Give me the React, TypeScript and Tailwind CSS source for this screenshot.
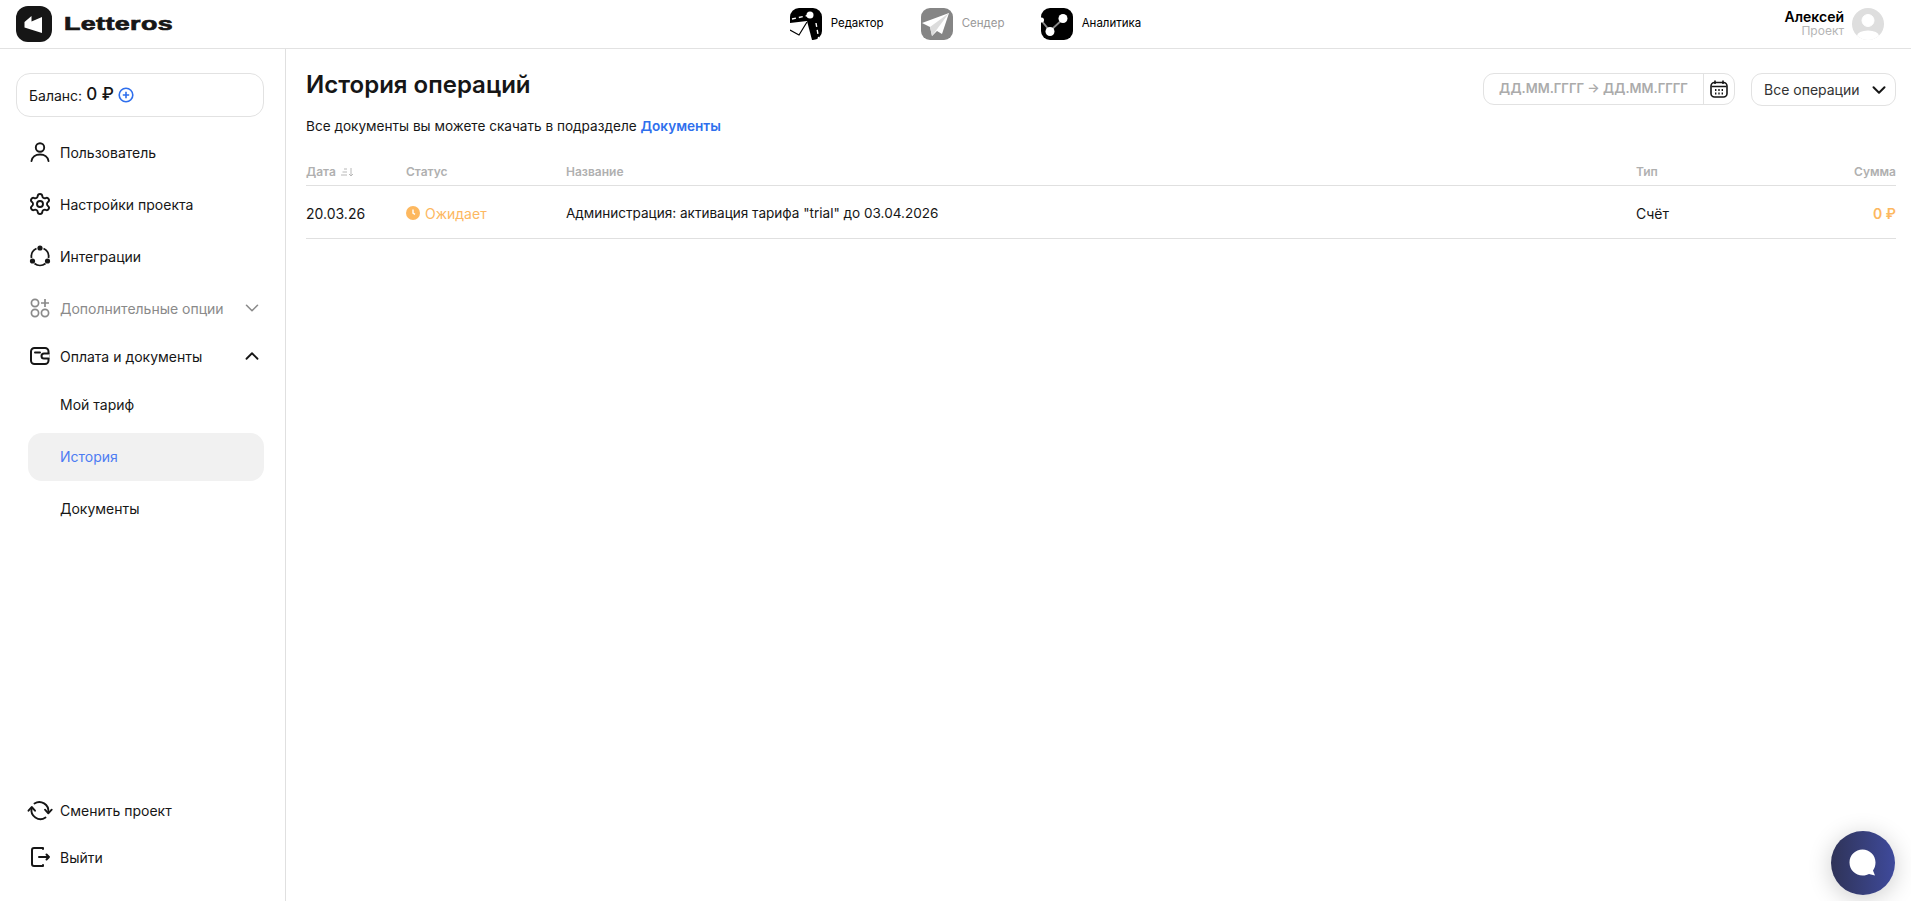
import React from 'react';
import { ChevronDown, ChevronUp, Settings } from 'lucide-react';

const LogoMark = () => (
  <svg viewBox="0 0 36 36" className="w-9 h-9 shrink-0">
    <rect width="36" height="36" rx="12" fill="#161616" />
    <path d="M8.500 16 15.500 10V15.500L26 11V27L8.500 21.500Z" fill="#fff" />
  </svg>
);

const EditorIcon = () => (
  <svg viewBox="0 0 32 32" className="w-8 h-8 shrink-0">
    <rect width="32" height="32" rx="9" fill="#000" />
    <path d="M2 11 20 7M26 15 29 32" stroke="#fff" strokeWidth="1.400" strokeDasharray="4 3" fill="none" />
    <circle cx="20" cy="7" r="3.500" fill="#fff" />
    <path d="M0 15 17 13 22 32H7Q0 32 0 25Z" fill="#fff" />
    <path d="M0 22 9 27 17 14" stroke="#000" strokeWidth="1.200" fill="none" />
  </svg>
);

const SenderIcon = () => (
  <svg viewBox="0 0 32 32" className="w-8 h-8 shrink-0">
    <rect width="32" height="32" rx="9" fill="#858585" />
    <path d="M28 5 1 15 9 19 11 28 16 23 21 26Z" fill="#fff" />
    <path d="M28 5 9 19 11 28Z" fill="#dcdcdc" />
  </svg>
);

const AnalyticsIcon = () => (
  <svg viewBox="0 0 32 32" className="w-8 h-8 shrink-0">
    <rect width="32" height="32" rx="9" fill="#000" />
    <path d="M0 12 9 23 22 11" stroke="#8a8a8a" strokeWidth="1.800" fill="none" />
    <circle cx="0.500" cy="12" r="2.500" fill="#fff" />
    <circle cx="9" cy="23.500" r="4.500" fill="#fff" />
    <circle cx="22" cy="10.500" r="4.500" fill="#fff" />
  </svg>
);

const UserIcon = () => (
  <svg viewBox="0 0 24 24" className="w-6 h-6" fill="none" stroke="#161616" strokeWidth="1.900" strokeLinecap="round">
    <circle cx="12" cy="7.500" r="4.200" />
    <path d="M3.500 21c.5-4 4-6.500 8.500-6.500s8 2.500 8.500 6.500" />
  </svg>
);

const IntegrationsIcon = () => (
  <svg viewBox="0 0 24 24" className="w-6 h-6" fill="none" stroke="#161616" strokeWidth="1.800">
    <path d="M8.500 4.500A9 9 0 0 0 3.500 14M15.500 4.500A9 9 0 0 1 20.500 14M6.500 19.500A9 9 0 0 0 17.500 19.500" />
    <circle cx="12" cy="4" r="2.600" fill="#161616" stroke="none" />
    <circle cx="4.500" cy="17" r="2.600" fill="#161616" stroke="none" />
    <circle cx="19.500" cy="17" r="2.600" fill="#161616" stroke="none" />
  </svg>
);

const OptionsIcon = () => (
  <svg viewBox="0 0 24 24" className="w-6 h-6" fill="none" stroke="#8a8a8a" strokeWidth="1.700">
    <circle cx="7" cy="7" r="3.600" />
    <circle cx="7" cy="17" r="3.600" />
    <circle cx="17" cy="17" r="3.600" />
    <path d="M17 3v8M13 7h8" />
  </svg>
);

const WalletIcon = () => (
  <svg viewBox="0 0 24 24" className="w-6 h-6" fill="none" stroke="#161616" strokeWidth="2" strokeLinecap="round">
    <rect x="3" y="4" width="17.500" height="16" rx="3.500" />
    <path d="M21.500 9.500H16a2.500 2.500 0 0 0 0 5h5.500Z" fill="#fff" stroke="#fff" strokeWidth="0" />
    <path d="M20.500 9.500H16a2.500 2.500 0 0 0 0 5h4.500" />
    <path d="M7 8.500h5" />
  </svg>
);

const SwitchIcon = () => (
  <svg viewBox="0 0 24 24" className="w-6 h-6 overflow-visible" fill="none" stroke="#161616" strokeWidth="1.900" strokeLinecap="round" strokeLinejoin="round">
    <path d="M6.500 5.500A9 9 0 0 1 20.300 14" />
    <path d="M3.700 10A9 9 0 0 0 17.500 19.500" />
    <path d="M0.500 12.700 3.700 9 7 12.700" />
    <path d="M17 11.700 20.300 15.300 23.700 11.700" />
  </svg>
);

const LogoutIcon = () => (
  <svg viewBox="0 0 24 24" className="w-6 h-6" fill="none" stroke="#161616" strokeWidth="2" strokeLinecap="round" strokeLinejoin="round">
    <path d="M15 4V3H6a2 2 0 0 0-2 2v14a2 2 0 0 0 2 2h9v-1" />
    <path d="M11 12h10M18.500 9.500 21 12l-2.500 2.500" />
  </svg>
);

const NavRow = ({ icon, label, right, muted }: { icon: React.ReactNode; label: string; right?: React.ReactNode; muted?: boolean }) => (
  <div className={`h-[48px] pl-[28px] pr-[22px] flex items-center ${muted ? 'text-[#8a8a8a]' : 'text-[#161616]'}`}>
    <span className="w-6 h-6 flex items-center justify-center mr-[8px] shrink-0">{icon}</span>
    <span className="text-[14px] flex-1">{label}</span>
    {right}
  </div>
);

const SubRow = ({ label, active }: { label: string; active?: boolean }) => (
  <div className={`h-[48px] mx-[28px] w-[236px] pl-[32px] pb-[2px] flex items-center rounded-[14px] text-[14px] ${active ? 'bg-[#f1f1f1] text-[#4d7cf3]' : 'text-[#161616]'}`}>
    {label}
  </div>
);

export default function App() {
  return (
    <div className="h-[901px] w-[1911px] overflow-hidden bg-white flex flex-col font-['Inter',sans-serif] text-[#161616] relative">
      <header className="h-[49px] shrink-0 border-b border-[#e2e2e2] flex items-center relative pl-4 pr-[27px]">
        <div className="flex items-center gap-[12px]">
          <LogoMark />
          <span className="font-['Liberation_Sans',sans-serif] font-bold text-[19px] tracking-[0.3px] [-webkit-text-stroke:0.7px_#161616] scale-x-[1.41] origin-left">Letteros</span>
        </div>
        <nav className="flex-1 flex items-center justify-center pl-[5px] gap-[24px]">
          <div className="flex items-center gap-[9px] w-[107px]">
            <EditorIcon />
            <span className="text-[11.5px] text-black">Редактор</span>
          </div>
          <div className="flex items-center gap-[9px] w-[96px]">
            <SenderIcon />
            <span className="text-[11.5px] text-[#999]">Сендер</span>
          </div>
          <div className="flex items-center gap-[9px]">
            <AnalyticsIcon />
            <span className="text-[11.5px] text-black">Аналитика</span>
          </div>
        </nav>
        <div className="flex items-center gap-[8px]">
          <div className="text-right leading-[14px]">
            <div className="text-[14px] font-semibold text-black">Алексей</div>
            <div className="text-[12px] text-[#b5b5b5]">Проект</div>
          </div>
          <svg viewBox="0 0 32 32" className="w-8 h-8">
            <defs>
              <clipPath id="ava">
                <circle cx="16" cy="16" r="16" />
              </clipPath>
            </defs>
            <circle cx="16" cy="16" r="16" fill="#dedede" />
            <g clipPath="url(#ava)">
              <circle cx="16" cy="12.500" r="6" fill="#fff" stroke="#fff" />
              <ellipse cx="16" cy="28" rx="11" ry="5.500" fill="#fff" />
            </g>
          </svg>
        </div>
      </header>

      <div className="flex flex-1 min-h-0">
        <aside className="w-[286px] shrink-0 border-r border-[#e0e0e0] flex flex-col pt-[24px] pb-[20px]">
          <div className="mx-4 w-[248px] h-[44px] border border-[#e2e2e2] rounded-[14px] flex items-center pl-[12px] text-[14px]">
            <span>Баланс:</span>
            <span className="ml-[4px] text-[17px] font-medium">0 ₽</span>
            <svg viewBox="0 0 16 16" className="w-4 h-4 ml-[4px]" fill="none" stroke="#2f6fed" strokeWidth="1.600">
              <circle cx="8" cy="8" r="6.800" />
              <path d="M8 4.800v6.400M4.800 8h6.400" />
            </svg>
          </div>
          <div className="mt-[11px]">
            <NavRow icon={<UserIcon />} label="Пользователь" />
            <div className="h-[4px]" />
            <NavRow icon={<Settings size={24} strokeWidth={1.9} />} label="Настройки проекта" />
            <div className="h-[4px]" />
            <NavRow icon={<IntegrationsIcon />} label="Интеграции" />
            <div className="h-[4px]" />
            <NavRow muted icon={<OptionsIcon />} label="Дополнительные опции" right={<ChevronDown size={22} strokeWidth={1.7} className="text-[#8a8a8a]" />} />
            <NavRow icon={<WalletIcon />} label="Оплата и документы" right={<ChevronUp size={22} strokeWidth={2} />} />
            <div className="h-px" />
            <SubRow label="Мой тариф" />
            <div className="h-[4px]" />
            <SubRow label="История" active />
            <div className="h-[4px]" />
            <SubRow label="Документы" />
          </div>
          <div className="mt-auto">
            <div className="-mb-px">
              <NavRow icon={<SwitchIcon />} label="Сменить проект" />
            </div>
            <NavRow icon={<LogoutIcon />} label="Выйти" />
          </div>
        </aside>

        <main className="flex-1 min-w-0 pl-[20px] pr-[15px] pt-[24px]">
          <div className="flex items-start justify-between">
            <div>
              <h1 className="text-[24px] leading-[24px] font-semibold">История операций</h1>
              <p className="text-[13.6px] leading-[18px] mt-[20px]">
                Все документы вы можете скачать в подразделе{' '}
                <span className="font-semibold text-[#2f6fed]">Документы</span>
              </p>
            </div>
            <div className="flex items-start gap-4">
              <div className="w-[252px] h-[32px] border border-[#e2e2e2] rounded-[11px] flex items-center">
                <div className="w-[219px] text-center text-[13px] font-semibold text-[#ababab] whitespace-nowrap">ДД.ММ.ГГГГ → ДД.ММ.ГГГГ</div>
                <div className="flex-1 h-full border-l border-[#e2e2e2] flex items-center justify-center">
                  <svg viewBox="0 0 20 20" className="w-5 h-5" fill="none" stroke="#161616" strokeWidth="1.600">
                    <rect x="2" y="3.500" width="16" height="14.500" rx="3.500" />
                    <path d="M6 1.500v3.500M14 1.500v3.500M2.500 7.500h15" />
                    <path d="M6 11h1.400M9.300 11h1.400M12.600 11h1.400M6 14.500h1.400M9.300 14.500h1.400M12.600 14.500h1.400" strokeWidth="1.800" />
                  </svg>
                </div>
              </div>
              <div className="w-[145px] h-[33px] border border-[#e2e2e2] rounded-[11px] flex items-center justify-between pl-[12px] pr-[5px] text-[14px] text-[#333]">
                <span>Все операции</span>
                <ChevronDown size={22} strokeWidth={2.2} className="text-[#161616]" />
              </div>
            </div>
          </div>

          <div className="mt-[24px] h-[27px] border-b border-[#e0e0e0] grid grid-cols-[100px_160px_1fr_150px_110px] items-center text-[12px] font-semibold text-[#b0b0b0]">
            <div className="flex items-center gap-[4px]">
              Дата
              <svg viewBox="0 0 14 10" className="w-[14px] h-[10px]" fill="none" stroke="#b8b8b8" strokeWidth="1">
                <path d="M4 2h3M2.500 5h4.500M1 8h6M11 1v8M9 7l2 2 2-2" />
              </svg>
            </div>
            <div>Статус</div>
            <div>Название</div>
            <div>Тип</div>
            <div className="text-right">Сумма</div>
          </div>
          <div className="h-[53px] pt-[2px] border-b border-[#e0e0e0] grid grid-cols-[100px_160px_1fr_150px_110px] items-center text-[14px]">
            <div>20.03.26</div>
            <div className="flex items-center gap-[5px] text-[#fdb85f]">
              <svg viewBox="0 0 14 14" className="w-[14px] h-[14px]">
                <circle cx="7" cy="7" r="7" fill="#fdb85f" />
                <path d="M7 3.500V7l2 1.300" stroke="#fff" strokeWidth="1.400" fill="none" />
              </svg>
              Ожидает
            </div>
            <div className="text-[13.55px]">Администрация: активация тарифа "trial" до 03.04.2026</div>
            <div>Счёт</div>
            <div className="text-right font-semibold text-[#fdb85f]">0 ₽</div>
          </div>
        </main>
      </div>

      <div className="absolute left-[1831px] top-[831px] w-16 h-16 rounded-full bg-gradient-to-r from-[#2f3358] to-[#3f4a9c] shadow-[0_4px_24px_rgba(0,0,0,0.2)] flex items-center justify-center">
        <svg viewBox="0 0 32 32" className="w-8 h-8">
          <path d="M15.500 2.500C8.500 2.500 2.500 8 2.500 15.500S8.500 28.500 15.500 28.500c3 0 5-.7 6.500-1.500l6 1.500-2-5c1.500-2 2.500-5 2.500-8C28.500 8 22.500 2.500 15.500 2.500Z" fill="#fff" />
        </svg>
      </div>
    </div>
  );
}
